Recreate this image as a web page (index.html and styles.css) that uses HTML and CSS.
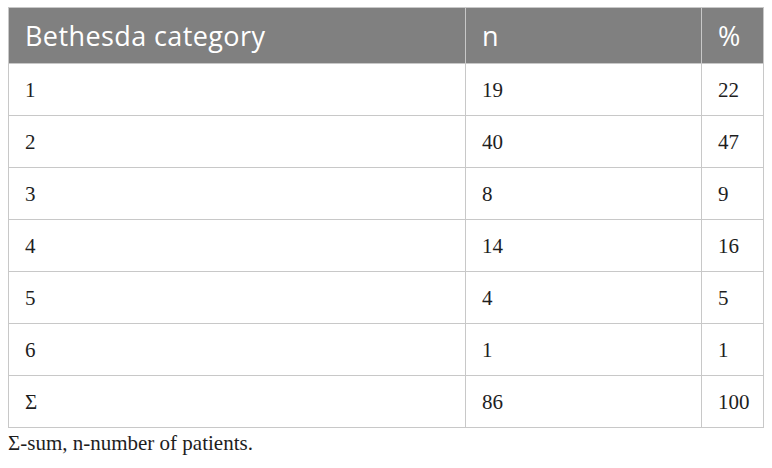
FILE: index.html
```html
<!DOCTYPE html>
<html>
<head>
<meta charset="utf-8">
<link rel="stylesheet" href="styles.css">
</head>
<body>
<div class="wrap">
<table class="data">
<colgroup><col class="c1"><col class="c2"><col class="c3"></colgroup>
<thead>
<tr><th>Bethesda category</th><th>n</th><th>%</th></tr>
</thead>
<tbody>
<tr><td>1</td><td>19</td><td>22</td></tr>
<tr><td>2</td><td>40</td><td>47</td></tr>
<tr><td>3</td><td>8</td><td>9</td></tr>
<tr><td>4</td><td>14</td><td>16</td></tr>
<tr><td>5</td><td>4</td><td>5</td></tr>
<tr><td>6</td><td>1</td><td>1</td></tr>
<tr><td>Σ</td><td>86</td><td>100</td></tr>
</tbody>
</table>
<p class="note">Σ-sum, n-number of patients.</p>
</div>
</body>
</html>
```
FILE: styles.css
```css
html, body {
  margin: 0;
  padding: 0;
  background: #ffffff;
}
.wrap {
  padding: 7px 9px 0 8px;
}
.data {
  border-collapse: collapse;
  table-layout: fixed;
  width: 755px;
}
.c1 { width: 457px; }
.c2 { width: 236px; }
.c3 { width: 62px; }
.data th, .data td {
  border: 1px solid #c8c8c8;
  text-align: left;
  padding: 0 0 0 16px;
}
.data th {
  background: #808080;
  color: #ffffff;
  font-family: "Open Sans", sans-serif;
  font-weight: 400;
  font-size: 27px;
  line-height: 34px;
  letter-spacing: 0.4px;
  height: 55px;
}
.data td {
  font-family: "Liberation Serif", serif;
  font-size: 21px;
  line-height: 24px;
  color: #1e1e1e;
  height: 51px;
}
.note {
  margin: 3px 0 0 0;
  font-family: "Liberation Serif", serif;
  font-size: 21px;
  line-height: 24px;
  color: #1e1e1e;
}
```
